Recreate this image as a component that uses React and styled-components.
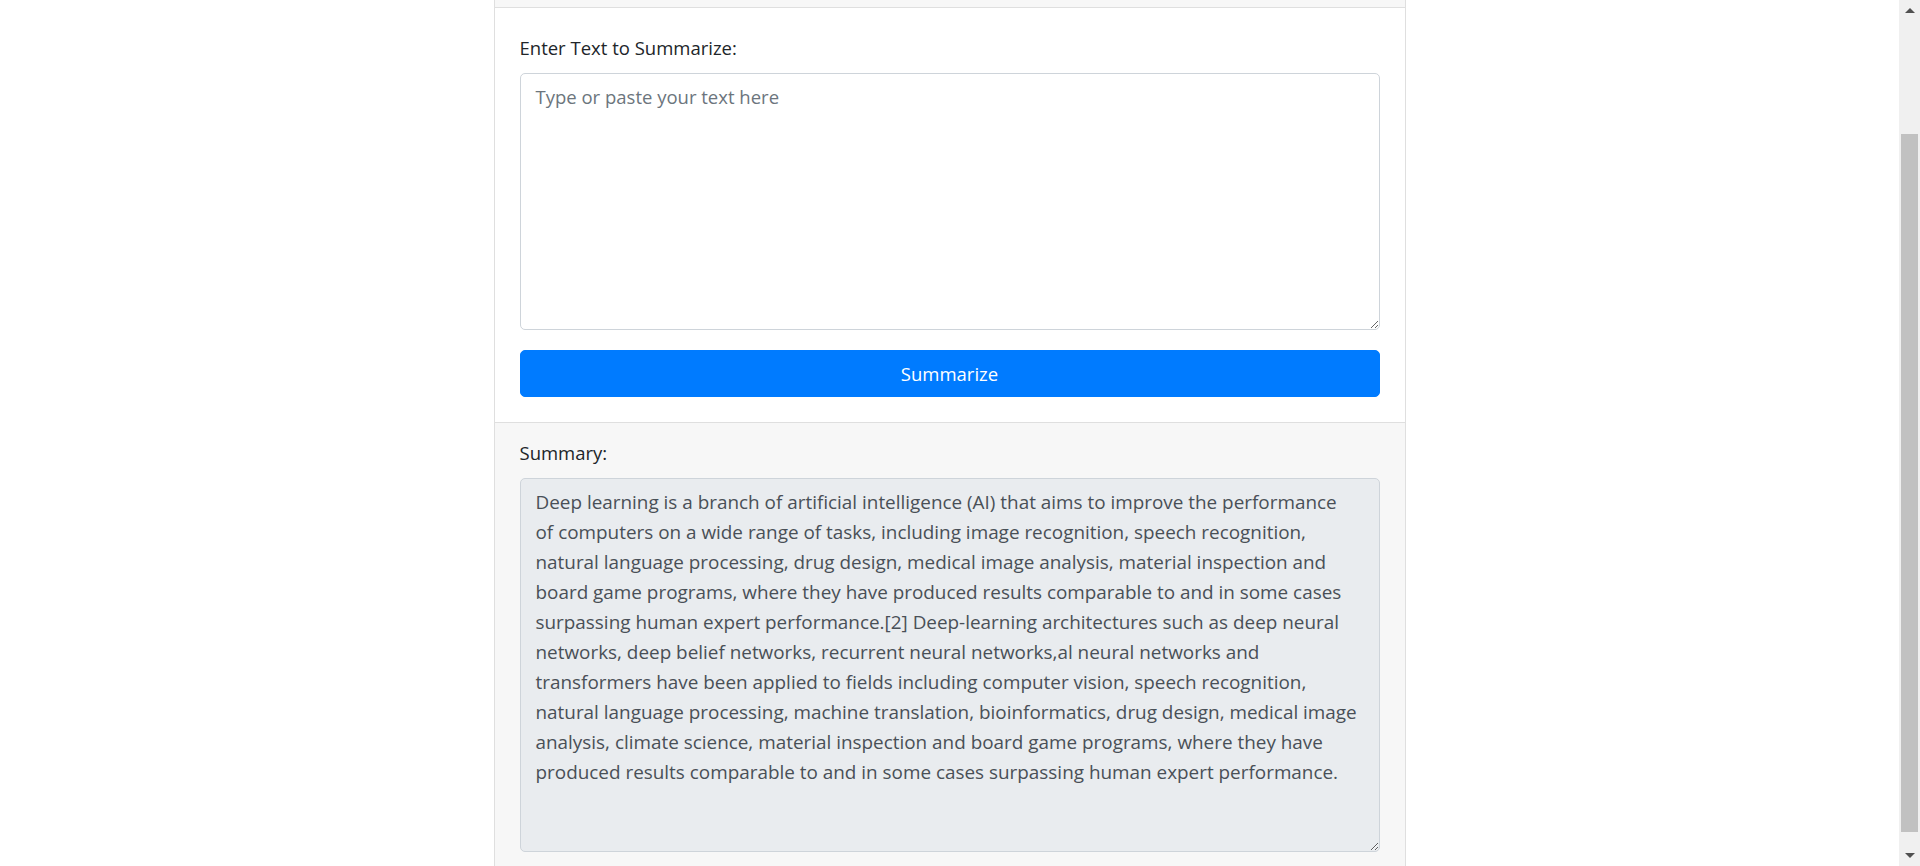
import React from 'react';
import styled, { createGlobalStyle } from 'styled-components';

const Global = createGlobalStyle`
  html, body { margin: 0; padding: 0; height: 866px; overflow: hidden; background: #fff; }
  body { font-family: "Segoe UI", "Open Sans", "Noto Sans", sans-serif; color: #212529; }
  * { box-sizing: border-box; }
`;

const FONT_SIZE = '18.5px';

const Viewport = styled.div`
  display: flex;
  width: 1920px;
  height: 866px;
  overflow: hidden;
`;

const Page = styled.main`
  flex: 0 0 1899px;
  display: flex;
  justify-content: center;
  align-items: flex-start;
  overflow: hidden;
`;

const Card = styled.section`
  width: 912px;
  display: flex;
  flex-direction: column;
  border: 1px solid #dfdfdf;
  border-top: none;
  border-bottom: none;
`;

const CardHeader = styled.div`
  height: 8px;
  background: #f7f7f7;
  border-bottom: 1px solid #dfdfdf;
`;

const CardBody = styled.div`
  padding: 25px 25px;
  background: #fff;
`;

const CardFooter = styled.div`
  padding: 15px 25px;
  background: #f7f7f7;
  border-top: 1px solid #dfdfdf;
`;

const Label = styled.label`
  display: block;
  font-size: ${FONT_SIZE};
  line-height: 30px;
  margin-bottom: 10px;
  color: #212529;
`;

const TextArea = styled.textarea`
  display: block;
  width: 100%;
  height: ${p => p.$h}px;
  padding: 7.5px 15px;
  font-family: inherit;
  font-size: ${p => (p.readOnly ? '18.9px' : FONT_SIZE)};
  line-height: 30px;
  color: #495057;
  background: ${p => (p.readOnly ? '#e9ecef' : '#fff')};
  border: 1px solid #ced4da;
  border-radius: 5px;
  resize: vertical;
  outline: none;
  overflow: hidden;
  &::placeholder { color: #6c757d; opacity: 1; }
`;

const Button = styled.button`
  display: block;
  width: 100%;
  height: 47px;
  margin-top: 20px;
  padding: 7.5px 15px;
  font-family: inherit;
  font-size: ${FONT_SIZE};
  line-height: 30px;
  color: #fff;
  background: #007bff;
  border: 1px solid #007bff;
  border-radius: 5px;
  cursor: pointer;
`;

const Scrollbar = styled.div`
  flex: 0 0 21px;
  display: flex;
  flex-direction: column;
  background: #f0f0f0;
`;

const ArrowBtn = styled.div`
  height: 21px;
  display: flex;
  align-items: center;
  justify-content: center;
  &::before {
    content: '';
    width: 0;
    height: 0;
    border-left: 5px solid transparent;
    border-right: 5px solid transparent;
    ${p => (p.$down ? 'border-top: 5px solid #505050;' : 'border-bottom: 5px solid #505050;')}
  }
`;

const Track = styled.div`
  flex: 1;
  display: flex;
  flex-direction: column;
  padding: 0 2px;
`;

const Thumb = styled.div`
  margin-top: ${p => p.$offset}px;
  height: ${p => p.$size}px;
  background: #c1c1c1;
`;

const SUMMARY_LINES = [
  'Deep learning is a branch of artificial intelligence (AI) that aims to improve the performance',
  'of computers on a wide range of tasks, including image recognition, speech recognition,',
  'natural language processing, drug design, medical image analysis, material inspection and',
  'board game programs, where they have produced results comparable to and in some cases',
  'surpassing human expert performance.[2] Deep-learning architectures such as deep neural',
  'networks, deep belief networks, recurrent neural networks,al neural networks and',
  'transformers have been applied to fields including computer vision, speech recognition,',
  'natural language processing, machine translation, bioinformatics, drug design, medical image',
  'analysis, climate science, material inspection and board game programs, where they have',
  'produced results comparable to and in some cases surpassing human expert performance.',
];

const SUMMARY = SUMMARY_LINES.join('\n');

export default function App() {
  return (
    <>
      <Global />
      <Viewport>
        <Page>
          <Card>
            <CardHeader />
            <CardBody>
              <Label htmlFor="input-text">Enter Text to Summarize:</Label>
              <TextArea id="input-text" $h={257} placeholder="Type or paste your text here" />
              <Button type="button">Summarize</Button>
            </CardBody>
            <CardFooter>
              <Label htmlFor="summary">Summary:</Label>
              <TextArea id="summary" $h={374} readOnly value={SUMMARY} />
            </CardFooter>
          </Card>
        </Page>
        <Scrollbar>
          <ArrowBtn />
          <Track>
            <Thumb $offset={113} $size={698} />
          </Track>
          <ArrowBtn $down />
        </Scrollbar>
      </Viewport>
    </>
  );
}
